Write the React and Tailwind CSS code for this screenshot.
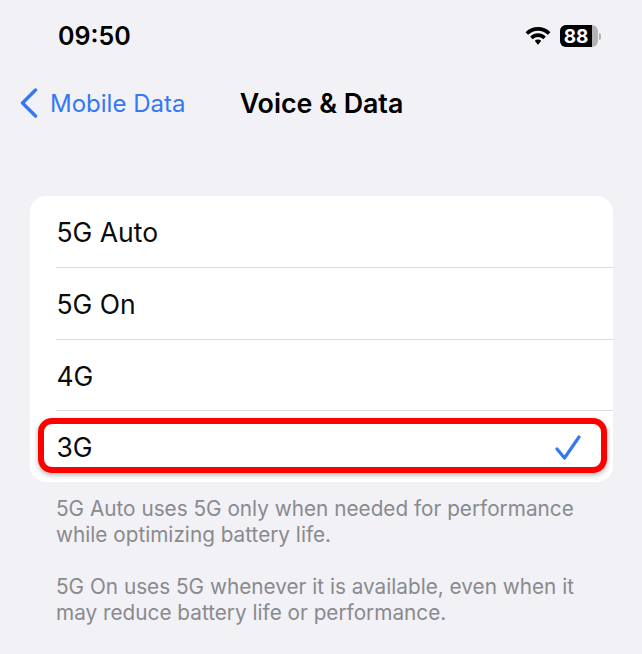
import React from "react";

const sf = "font-['Inter','Liberation_Sans',sans-serif]";

const Wifi = () => (
  <svg width="26" height="18" viewBox="0 0 26 18" fill="#000">
    <path d="M13 0c4.700 0 9 1.800 12.200 4.900.2.200.2.500 0 .7l-2 2c-.2.200-.5.200-.7 0C20 5.100 16.700 3.700 13 3.700S6 5.100 3.500 7.600c-.2.200-.5.200-.7 0l-2-2c-.2-.2-.2-.5 0-.7C4 1.800 8.300 0 13 0z" />
    <path d="M13 6.300c2.900 0 5.500 1.100 7.500 3 .2.200.2.500 0 .7l-2 2c-.2.200-.5.200-.7 0-1.300-1.200-3-1.900-4.800-1.900s-3.500.700-4.800 1.900c-.2.200-.5.200-.7 0l-2-2c-.2-.2-.2-.5 0-.7 2-1.900 4.600-3 7.500-3z" />
    <path d="M13 12.500c1.200 0 2.200.400 2.900 1.100.2.200.2.500 0 .7l-2.600 3.200c-.2.200-.4.200-.6 0l-2.600-3.200c-.2-.2-.2-.5 0-.7.700-.7 1.700-1.100 2.900-1.100z" />
  </svg>
);

const Battery = () => (
  <div className="flex items-center">
    <div className="flex h-[22px] w-[38px] overflow-hidden rounded-[6px] bg-[#b3b3b5]">
      <div className="flex w-[32px] items-center justify-center bg-black text-[19px] font-bold leading-none text-white">
        88
      </div>
    </div>
    <div className="ml-[1px] h-[7px] w-[2px] rounded-r-full bg-[#b3b3b5]" />
  </div>
);

const Row = ({ label, divider, height, children }) => (
  <div className="relative">
    <div className={`flex items-center pl-[26.500px] pr-[32px] pt-[2px] text-[26.500px] leading-none text-[#0b0b0b] ${height}`}>
      <span className="flex-1">{label}</span>
      {children}
    </div>
    {divider && <div className="ml-[26px] h-px bg-[#dcdcde]" />}
  </div>
);

export default function App() {
  return (
    <div className={`h-[654px] w-[642px] overflow-hidden bg-[#f1f1f6] ${sf}`}>
      <div className="flex h-[72px] items-center pl-[58px] pr-[41px]">
        <span className="flex-1 text-[25px] font-semibold leading-none text-black">09:50</span>
        <div className="flex items-center gap-[9px]">
          <Wifi />
          <Battery />
        </div>
      </div>

      <div className="relative flex h-[62px] items-center justify-center">
        <div className="absolute left-[20px] top-0 flex h-full items-center text-[#3478f6]">
          <svg width="18" height="30" viewBox="0 0 18 30" fill="none" stroke="currentColor" strokeWidth="3.400" strokeLinecap="round" strokeLinejoin="round">
            <path d="M15.500 2 L2.500 15 L15.500 28" />
          </svg>
          <span className="ml-[12px] pt-[1px] text-[24px] leading-none">Mobile Data</span>
        </div>
        <span className="pl-[1px] text-[26.800px] font-semibold leading-none text-black">Voice &amp; Data</span>
      </div>

      <div className="ml-[30px] mt-[62px] w-[583px] rounded-[16px] bg-white">
        <Row label="5G Auto" height="h-[71px]" divider />
        <Row label="5G On" height="h-[71px]" divider />
        <Row label="4G" height="h-[70px]" divider />
        <Row label="3G" height="h-[71px]">
          <svg width="26" height="25" viewBox="0 0 26 25" fill="none" stroke="#3478f6" strokeWidth="3.200" strokeLinecap="round" strokeLinejoin="round">
            <path d="M2 14 L9.500 23 L24 2" />
          </svg>
          <div className="absolute left-[8px] right-[6px] top-[7px] h-[55px] rounded-[14px] border-[6px] border-[#ff0000] shadow-[0_2px_5px_rgba(0,0,0,0.3)]" />
        </Row>
      </div>

      <div className="ml-[56px] mr-[50px] mt-[14px] text-[20.750px] leading-[26px] text-[#8a8a8e]">
        <p>5G Auto uses 5G only when needed for performance while optimizing battery life.</p>
        <p className="mt-[26px]">5G On uses 5G whenever it is available, even when it may reduce battery life or performance.</p>
      </div>
    </div>
  );
}
